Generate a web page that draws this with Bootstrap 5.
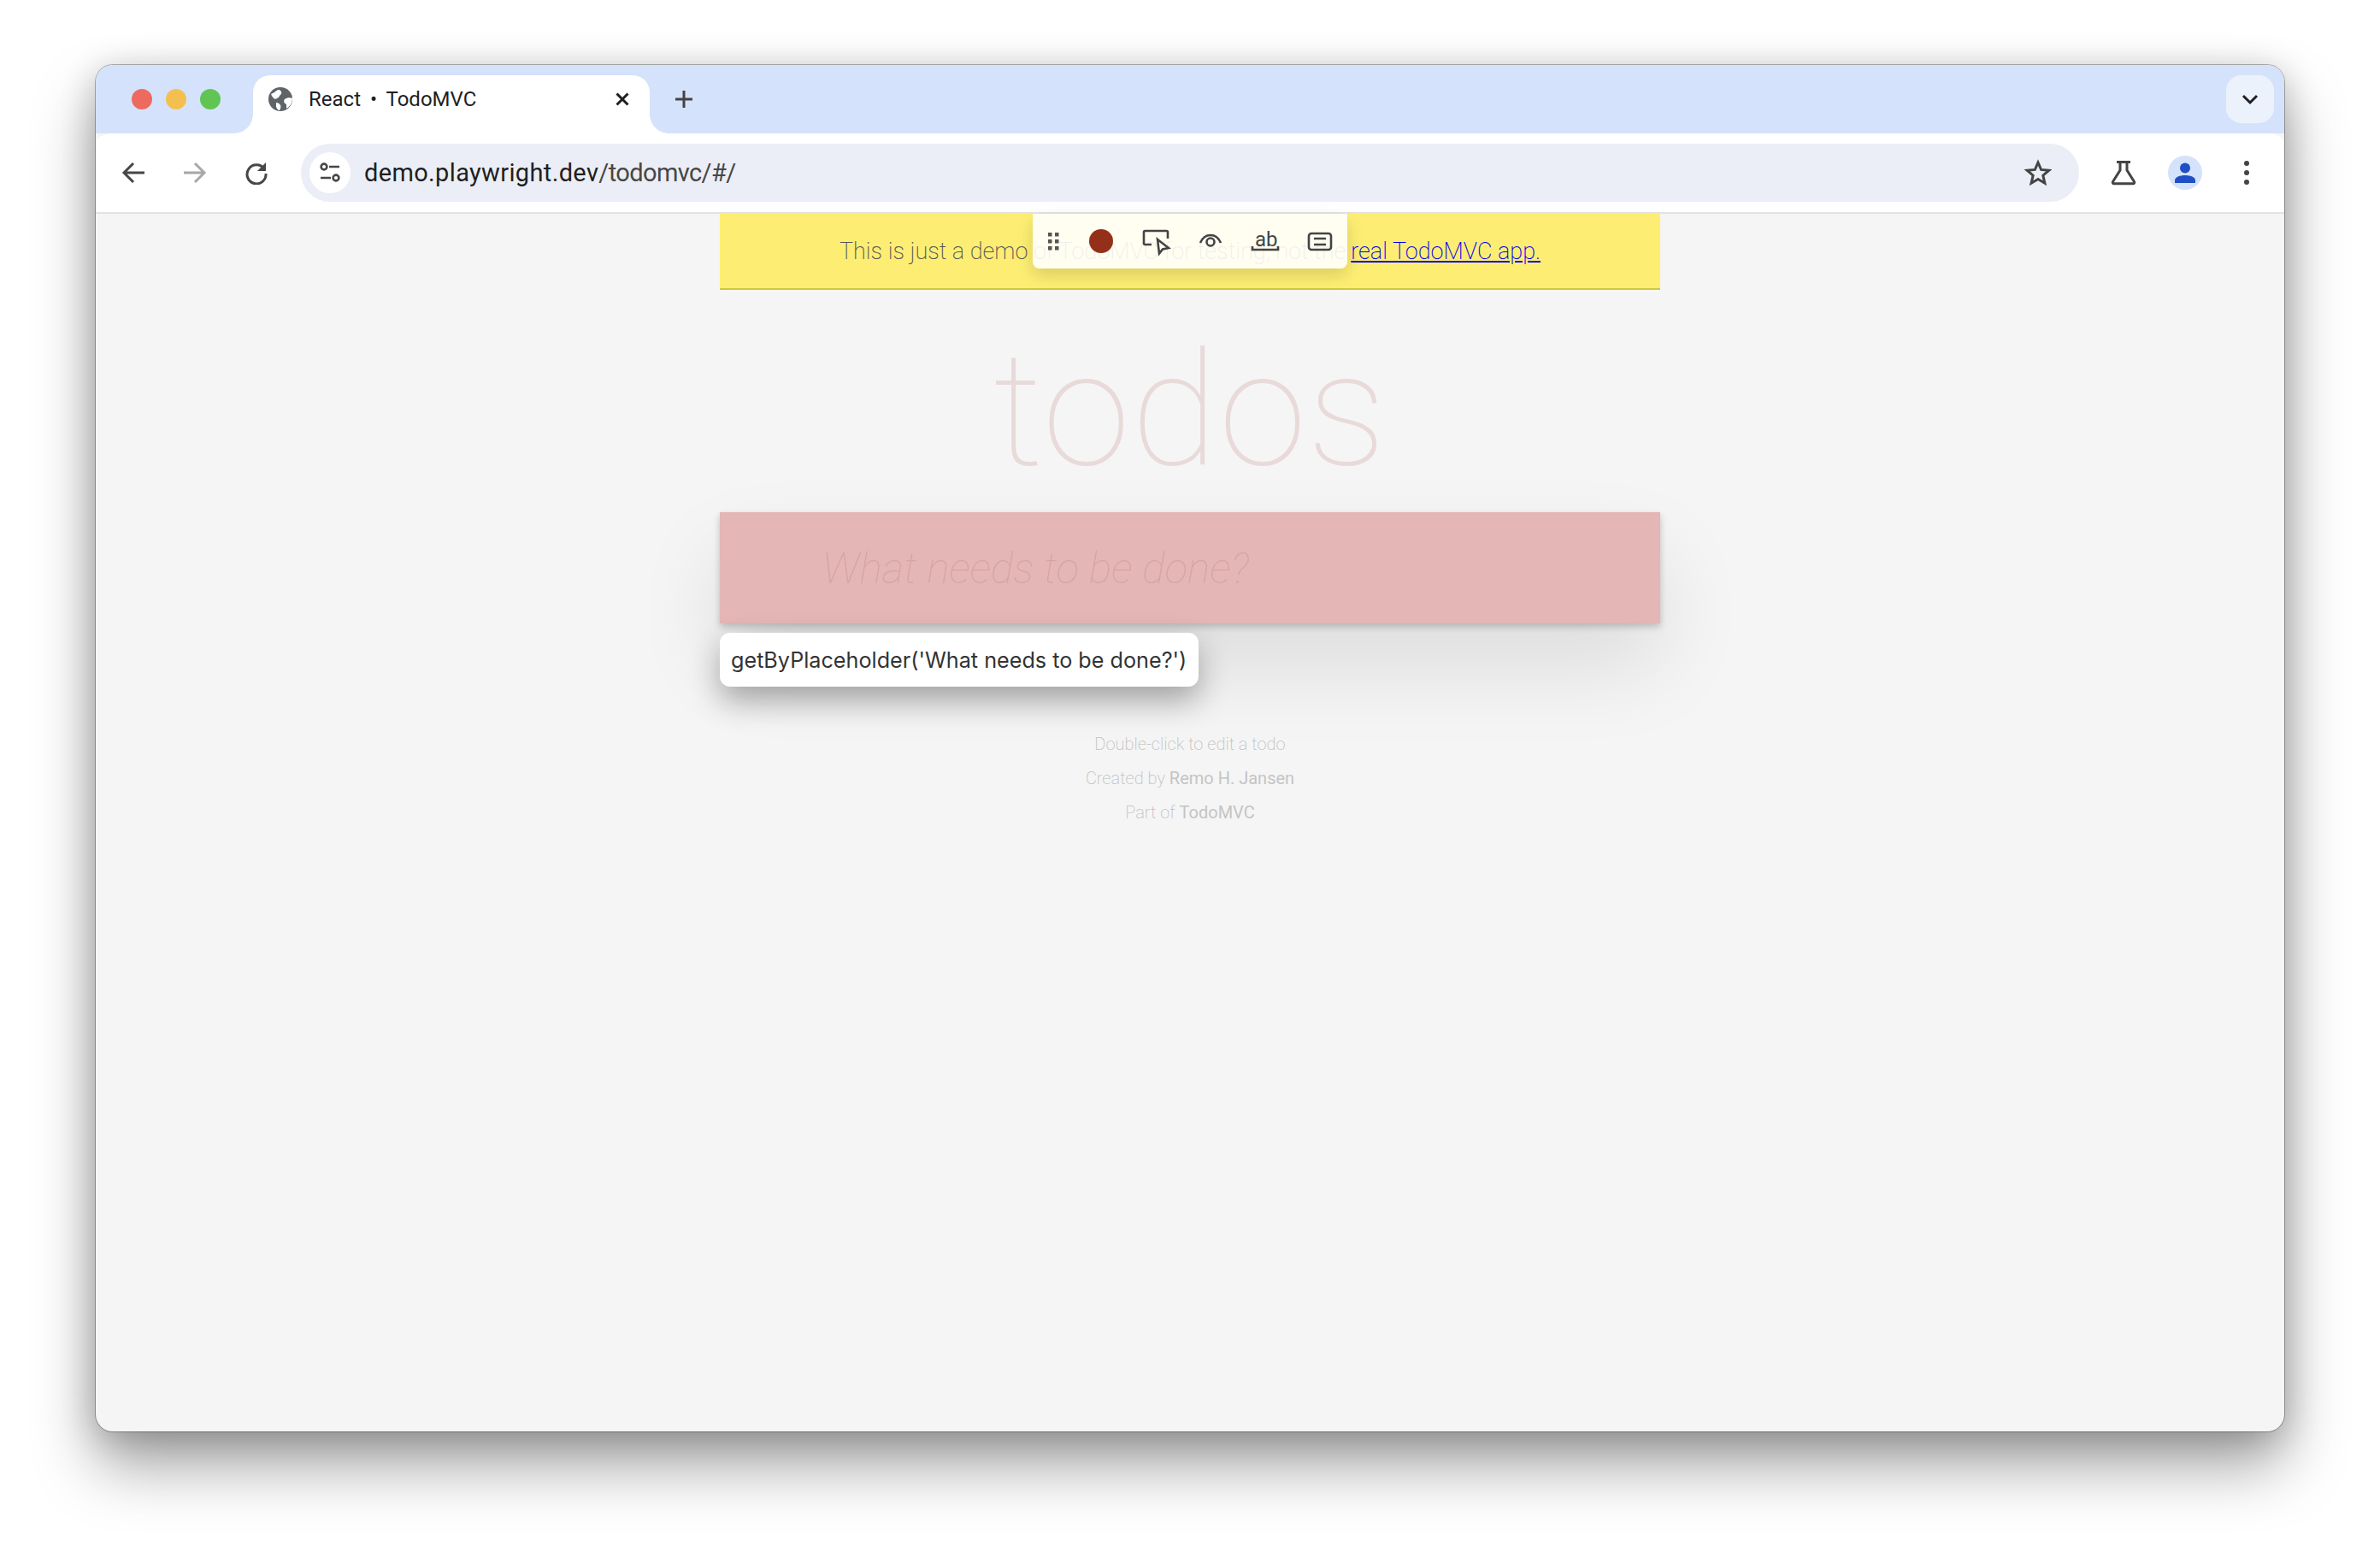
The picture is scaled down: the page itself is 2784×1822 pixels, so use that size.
<!DOCTYPE html>
<html lang="en">

<head>
    <meta charset="UTF-8">
    <title>React • TodoMVC</title>
    <link href="https://cdn.jsdelivr.net/npm/bootstrap@5.3.0/dist/css/bootstrap.min.css" rel="stylesheet">
    <style>
        body {
            background: #fff;
            height: 1822px;
            font-family: "Liberation Sans", sans-serif;
        }

        .browser-win {
            width: 2560px;
            height: 1598px;
            margin: 0 0 0 112px;
            position: relative;
            top: 76px;
            border-radius: 20px;
            background: #f5f5f5;
            box-shadow: 0 0 0 1px rgba(0, 0, 0, .28), 0 40px 72px rgba(0, 0, 0, .36), 0 6px 40px rgba(0, 0, 0, .2);
            overflow: hidden;
        }

        .tab-strip {
            height: 80px;
            background: #d5e2fb;
            padding-top: 12px;
        }

        .lights {
            width: 184px;
            height: 56px;
            padding-left: 42px;
            gap: 16px;
        }

        .light {
            width: 24px;
            height: 24px;
            border-radius: 50%;
        }

        .tab-live {
            width: 464px;
            height: 68px;
            background: #fff;
            border-radius: 20px 20px 0 0;
            padding: 0 22px 12px 18px;
            position: relative;
            z-index: 2;
        }

        .tab-live::before,
        .tab-live::after {
            content: "";
            position: absolute;
            bottom: 0;
            width: 22px;
            height: 22px;
        }

        .tab-live::before {
            left: -22px;
            background: radial-gradient(circle at 0 0, transparent 21.5px, #fff 22px);
        }

        .tab-live::after {
            right: -22px;
            background: radial-gradient(circle at 100% 0, transparent 21.5px, #fff 22px);
        }

        .tab-title {
            font-family: Roboto, sans-serif;
            font-size: 24px;
            word-spacing: 5px;
            color: #1f1f1f;
            margin-left: 19px;
        }

        .new-tab {
            height: 56px;
            margin-left: 28px;
        }

        .tab-search {
            width: 56px;
            height: 56px;
            margin-left: auto;
            margin-right: 12px;
            border-radius: 18px;
            background: #ecf2fc;
        }

        .tool-row {
            height: 92px;
            background: #fff;
            border-radius: 20px 20px 0 0 / 12px 12px 0 0;
            padding-left: 24px;
        }

        .tool-btn {
            width: 40px;
            margin-right: 32px;
        }

        .omni {
            width: 2080px;
            height: 68px;
            background: #ebeef6;
            border-radius: 34px;
            padding: 0 32px 0 10px;
        }

        .site-chip {
            width: 48px;
            height: 48px;
            border-radius: 50%;
            background: #fff;
            margin-right: 16px;
        }

        .url-text {
            font-family: Roboto, sans-serif;
            font-size: 29px;
            letter-spacing: .35px;
            padding-top: 2px;
            color: #1f1f1f;
        }

        .url-text span {
            letter-spacing: -.6px;
            color: #474747;
        }

        .profile-chip {
            width: 40px;
            height: 40px;
            margin-left: 12px;
            border-radius: 50%;
            background: #d5e2fb;
        }

        .tool-end {
            margin-left: 36px;
        }

        .page-rule {
            height: 2px;
            background: #e3e3e3;
        }

        .todo-col {
            width: 1100px;
            margin: 0 auto;
            position: relative;
        }

        .demo-banner {
            height: 89px;
            padding-top: 2px;
            background: #fdee73;
            border-bottom: 2px solid #cdc93b;
            font-family: Roboto, sans-serif;
            font-weight: 200;
            font-size: 27px;
            color: #555;
        }

        .demo-banner a {
            color: #0000ee;
            margin-left: 6px;
        }

        .todos-head {
            height: 260px;
            margin: 0;
            font-family: Roboto, sans-serif;
            font-weight: 100;
            font-size: 186px;
            letter-spacing: 1px;
            line-height: 280px;
            text-align: center;
            color: #e9dada;
        }

        .todo-input.form-control {
            height: 130px;
            background: #e4b6b6;
            border: 0;
            border-radius: 0;
            padding: 2px 0 0 120px;
            font-family: Roboto, sans-serif;
            font-weight: 100;
            font-style: italic;
            font-size: 49.6px;
            box-shadow: 0 4px 8px rgba(0, 0, 0, .2), 0 50px 100px rgba(0, 0, 0, .1);
        }

        .todo-input.form-control::placeholder {
            color: #d6a4a4;
            opacity: 1;
        }

        .foot-notes {
            margin-top: 121px;
            font-family: Roboto, sans-serif;
            font-weight: 200;
            font-size: 20px;
            line-height: 40px;
            text-align: center;
            color: #bfbfbf;
        }

        .foot-notes b {
            font-weight: 400;
            color: #c4c4c4;
        }

        .pw-tools {
            position: absolute;
            left: 366px;
            top: 0;
            width: 368px;
            height: 64px;
            background: rgba(255, 255, 255, .9);
            border-radius: 0 0 8px 8px;
            box-shadow: 0 8px 20px rgba(0, 0, 0, .14);
        }

        .pw-hint {
            position: absolute;
            left: 0;
            top: 490px;
            height: 63px;
            padding: 2px 14px 0 13px;
            background: #fff;
            border-radius: 12px;
            font-family: Inter, sans-serif;
            font-size: 25.2px;
            color: #333;
            white-space: nowrap;
            box-shadow: 0 16px 36px rgba(0, 0, 0, .32);
        }
    </style>
</head>

<body>

    <div class="browser-win">

        <!-- tab bar -->
        <div class="tab-strip d-flex align-items-start">
            <div class="lights d-flex align-items-center">
                <div class="light" style="background:#ed6a5e"></div>
                <div class="light" style="background:#f5bf4f"></div>
                <div class="light" style="background:#61c554"></div>
            </div>
            <div class="tab-live d-flex align-items-center">
                <svg width="28" height="28" viewBox="0 0 28 28">
                    <circle cx="14" cy="14" r="14" fill="#5f6368" />
                    <path d="M3 8c3-1 5-3 8-5 3 0 5 2 4 5-2 1-2 4-5 5-2 2-5 0-7-5zM28 13c-3-1-6-1-9 1-2 3 0 5 2 6v5c4-2 7-7 7-12zM9 18c2 0 4 1 5 3s0 4-1 6c-2 0-3-2-4-4z" fill="#fff" />
                </svg>
                <div class="tab-title">React • TodoMVC</div>
                <svg class="ms-auto" width="20" height="20" viewBox="0 0 20 20">
                    <path d="M3.500 3.500l13 13M16.500 3.500l-13 13" stroke="#1f1f1f" stroke-width="3" />
                </svg>
            </div>
            <svg class="new-tab" width="24" height="24" viewBox="0 0 24 24">
                <path d="M12 2v20M2 12h20" stroke="#444" stroke-width="3" />
            </svg>
            <div class="tab-search d-flex align-items-center justify-content-center">
                <svg width="20" height="14" viewBox="0 0 20 14">
                    <path d="M2 3l8 8 8-8" fill="none" stroke="#1f1f1f" stroke-width="3" />
                </svg>
            </div>
        </div>

        <!-- address bar -->
        <div class="tool-row d-flex align-items-center">
            <div class="tool-btn d-flex justify-content-center">
                <svg width="28" height="28" viewBox="0 0 28 28">
                    <path d="M27 14H4M14 3L3 14l11 11" fill="none" stroke="#474747" stroke-width="3" />
                </svg>
            </div>
            <div class="tool-btn d-flex justify-content-center">
                <svg width="28" height="28" viewBox="0 0 28 28">
                    <path d="M1 14h23M14 3l11 11-11 11" fill="none" stroke="#a8a8a8" stroke-width="3" />
                </svg>
            </div>
            <div class="tool-btn d-flex justify-content-center">
                <svg width="28" height="28" viewBox="0 0 28 28">
                    <path d="M23 9.500A11 11 0 1 0 25 15" fill="none" stroke="#474747" stroke-width="3" />
                    <path d="M25 2v10H15z" fill="#474747" />
                </svg>
            </div>
            <div class="omni d-flex align-items-center">
                <div class="site-chip d-flex align-items-center justify-content-center">
                    <svg width="24" height="24" viewBox="0 0 24 24" fill="none" stroke="#474747" stroke-width="2.6">
                        <circle cx="5" cy="5" r="3.4" />
                        <path d="M11 5h12M1 18h12" />
                        <circle cx="19" cy="18" r="3.4" />
                    </svg>
                </div>
                <div class="url-text">demo.playwright.dev<span>/todomvc/#/</span></div>
                <svg class="ms-auto" width="32" height="32" viewBox="0 0 32 32">
                    <path d="M16 4l3.600 8.400 9.200.8-7 6 2.100 9L16 23.500l-7.900 4.700 2.100-9-7-6 9.200-.8z" fill="none" stroke="#444" stroke-width="3" />
                </svg>
            </div>
            <div class="tool-end d-flex align-items-center">
                <svg class="me-4" width="32" height="32" viewBox="0 0 32 32">
                    <path d="M8 3.500h16M12 3.500v9.500L3.500 26.500a1.500 1.500 0 0 0 1.300 2.300h22.400a1.500 1.500 0 0 0 1.300-2.300L20 13V3.500" fill="none" stroke="#444" stroke-width="3" />
                </svg>
                <div class="profile-chip d-flex align-items-center justify-content-center">
                    <svg width="26" height="26" viewBox="0 0 26 26">
                        <circle cx="13" cy="7.500" r="6" fill="#1f4fc4" />
                        <path d="M1 25v-3c0-4 6-6 12-6s12 2 12 6v3z" fill="#1f4fc4" />
                    </svg>
                </div>
                <svg class="ms-5" width="8" height="30" viewBox="0 0 8 30">
                    <circle cx="4" cy="4" r="3" fill="#444" />
                    <circle cx="4" cy="15" r="3" fill="#444" />
                    <circle cx="4" cy="26" r="3" fill="#444" />
                </svg>
            </div>
        </div>
        <div class="page-rule"></div>

        <!-- page -->
        <div class="todo-col">
            <div class="demo-banner d-flex align-items-center justify-content-center">
                <span>This is just a demo of TodoMVC for testing, not the<a href="#">real TodoMVC app.</a></span>
            </div>
            <h1 class="todos-head">todos</h1>
            <input class="form-control todo-input" type="text" placeholder="What needs to be done?">
            <div class="foot-notes">
                <div>Double-click to edit a todo</div>
                <div>Created by <b>Remo H. Jansen</b></div>
                <div>Part of <b>TodoMVC</b></div>
            </div>

            <!-- playwright overlay -->
            <div class="pw-tools d-flex align-items-center">
                <svg width="368" height="64" viewBox="0 0 368 64" fill="none" stroke="#444" stroke-width="2.600">
                    <g fill="#555" stroke="none">
                        <rect x="18" y="22" width="4.500" height="4.500" />
                        <rect x="26" y="22" width="4.500" height="4.500" />
                        <rect x="18" y="30" width="4.500" height="4.500" />
                        <rect x="26" y="30" width="4.500" height="4.500" />
                        <rect x="18" y="38" width="4.500" height="4.500" />
                        <rect x="26" y="38" width="4.500" height="4.500" />
                    </g>
                    <circle cx="80" cy="32" r="14" fill="#94301a" stroke="none" />
                    <path d="M139 36h-7.500a1.500 1.500 0 0 1-1.500-1.500v-13a1.500 1.500 0 0 1 1.500-1.500h25a1.500 1.500 0 0 1 1.500 1.500V29" />
                    <path d="M146 30l13 10-7 1.500-4 5z" />
                    <path d="M196 34c3-7 7-9 12-9s9 2 12 9" />
                    <circle cx="208" cy="33" r="4.500" />
                    <path d="M257 38v4h30v-4" />
                    <text x="260" y="38" font-family="Roboto, sans-serif" font-size="24" fill="#444" stroke="none">ab</text>
                    <rect x="323" y="23" width="26" height="19" rx="3" />
                    <path d="M329 29h14M329 36h14" />
                </svg>
            </div>
            <div class="pw-hint d-flex align-items-center">getByPlaceholder('What needs to be done?')</div>
        </div>
    </div>

    <script src="https://cdn.jsdelivr.net/npm/bootstrap@5.3.0/dist/js/bootstrap.bundle.min.js"></script>
</body>

</html>
